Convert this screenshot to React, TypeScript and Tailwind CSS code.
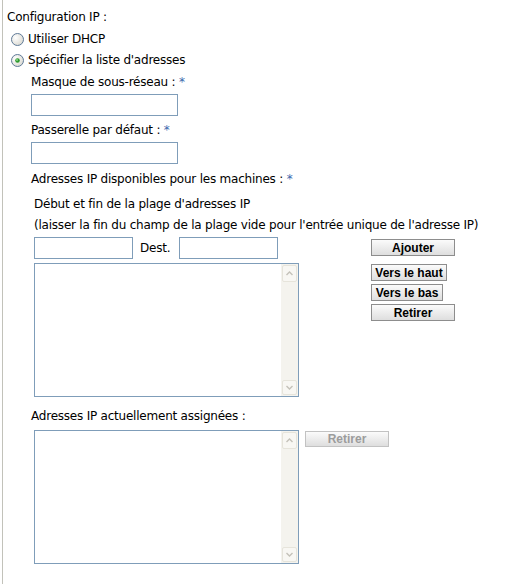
const Radio = ({ checked }: { checked?: boolean }) => (
  <svg width="13" height="13" viewBox="0 0 13 13" className="shrink-0">
    <defs>
      <radialGradient id={checked ? "rg1" : "rg0"} cx="0.35" cy="0.35" r="0.75">
        <stop offset="0" stopColor="#ffffff" />
        <stop offset="1" stopColor="#d8d7cf" />
      </radialGradient>
    </defs>
    <circle cx="6.5" cy="6.5" r="6" fill={`url(#${checked ? "rg1" : "rg0"})`} stroke="#5f7a98" strokeWidth="1" />
    {checked && (
      <>
        <circle cx="6.5" cy="6.5" r="2.3" fill="#2f9a2f" />
        <circle cx="6" cy="6" r="0.9" fill="#8fdc8f" />
      </>
    )}
  </svg>
);

const Caret = ({ up }: { up?: boolean }) => (
  <svg width="7" height="5" viewBox="0 0 7 5">
    <path d={up ? "M0.5 4L3.5 1L6.5 4" : "M0.5 1L3.5 4L6.5 1"} fill="none" stroke="#c4c2b9" strokeWidth="1.4" />
  </svg>
);

const ListBox = () => (
  <div className="flex h-[134px] w-[265px] border border-[#7f9db9] bg-white">
    <div className="flex-1" />
    <div className="flex w-[17px] flex-col justify-between bg-[#f4f3ee] px-[1px] py-[1px]">
      <div className="flex h-[17px] items-center justify-center rounded-[2px] border border-[#e6e4db] bg-[#f8f7f3]">
        <Caret up />
      </div>
      <div className="flex h-[15px] items-center justify-center rounded-[2px] border border-[#e6e4db] bg-[#f8f7f3]">
        <Caret />
      </div>
    </div>
  </div>
);

const Btn = ({ label, width, disabled }: { label: string; width: string; disabled?: boolean }) => (
  <button
    className={`${width} ${
      disabled
        ? "h-[16px] border-[#c2c2c2] text-[#9c9c9c]"
        : "h-[17px] border-[#8d8d8d] text-black"
    } flex items-center justify-center border bg-linear-to-b from-[#fbfbfb] to-[#dedede] font-['Liberation_Sans',Arial,sans-serif] text-[12px] font-bold leading-none tracking-normal`}
  >
    {label}
  </button>
);

const Star = () => <span className="text-[#3b68ad]">*</span>;

export default function App() {
  return (
    <div className="h-[584px] w-[513px] bg-white pl-[2px] font-['DejaVu_Sans',sans-serif] text-[12px] leading-[20px] tracking-[-0.22px] text-black">
      <div className="flex h-full flex-col border-l border-[#c2c2ba] pl-[4px] pt-[7px]">
        <div>Configuration IP :</div>
        <div className="mt-[2px] flex items-center gap-[4px] pl-[4px]">
          <Radio />
          <span>Utiliser DHCP</span>
        </div>
        <div className="mt-[1px] flex items-center gap-[4px] pl-[4px]">
          <Radio checked />
          <span>Spécifier la liste d'adresses</span>
        </div>

        <div className="flex flex-col pl-[24px]">
          <div className="mt-[2px]">
            Masque de sous-réseau : <Star />
          </div>
          <input className="mt-[2px] h-[22px] w-[147px] border border-[#7f9db9] bg-white outline-none" />
          <div className="mt-[4px]">
            Passerelle par défaut : <Star />
          </div>
          <input className="mt-[2px] h-[22px] w-[147px] border border-[#7f9db9] bg-white outline-none" />
          <div className="mt-[5px]">
            Adresses IP disponibles pour les machines : <Star />
          </div>
          <div className="mt-[5px] pl-[3px]">Début et fin de la plage d'adresses IP</div>
          <div className="mt-[1px] pl-[3px]">
            (laisser la fin du champ de la plage vide pour l'entrée unique de l'adresse IP)
          </div>

          <div className="mt-[2px] flex pl-[3px]">
            <div className="flex w-[265px] flex-col">
              <div className="flex h-[22px] items-center">
                <input className="h-[22px] w-[99px] border border-[#7f9db9] bg-white outline-none" />
                <span className="ml-[7px]">Dest.</span>
                <input className="ml-[9px] h-[22px] w-[99px] border border-[#7f9db9] bg-white outline-none" />
              </div>
              <div className="mt-[4px]">
                <ListBox />
              </div>
            </div>
            <div className="ml-[72px] flex flex-col items-start">
              <div className="mt-[2px]">
                <Btn label="Ajouter" width="w-[84px]" />
              </div>
              <div className="mt-[8px]">
                <Btn label="Vers le haut" width="w-[76px]" />
              </div>
              <div className="mt-[3px]">
                <Btn label="Vers le bas" width="w-[72px]" />
              </div>
              <div className="mt-[3px]">
                <Btn label="Retirer" width="w-[84px]" />
              </div>
            </div>
          </div>

          <div className="mt-[9px]">Adresses IP actuellement assignées :</div>
          <div className="mt-[4px] flex items-start pl-[3px]">
            <ListBox />
            <div className="ml-[6px] mt-[1px]">
              <Btn label="Retirer" width="w-[84px]" disabled />
            </div>
          </div>
        </div>
      </div>
    </div>
  );
}
